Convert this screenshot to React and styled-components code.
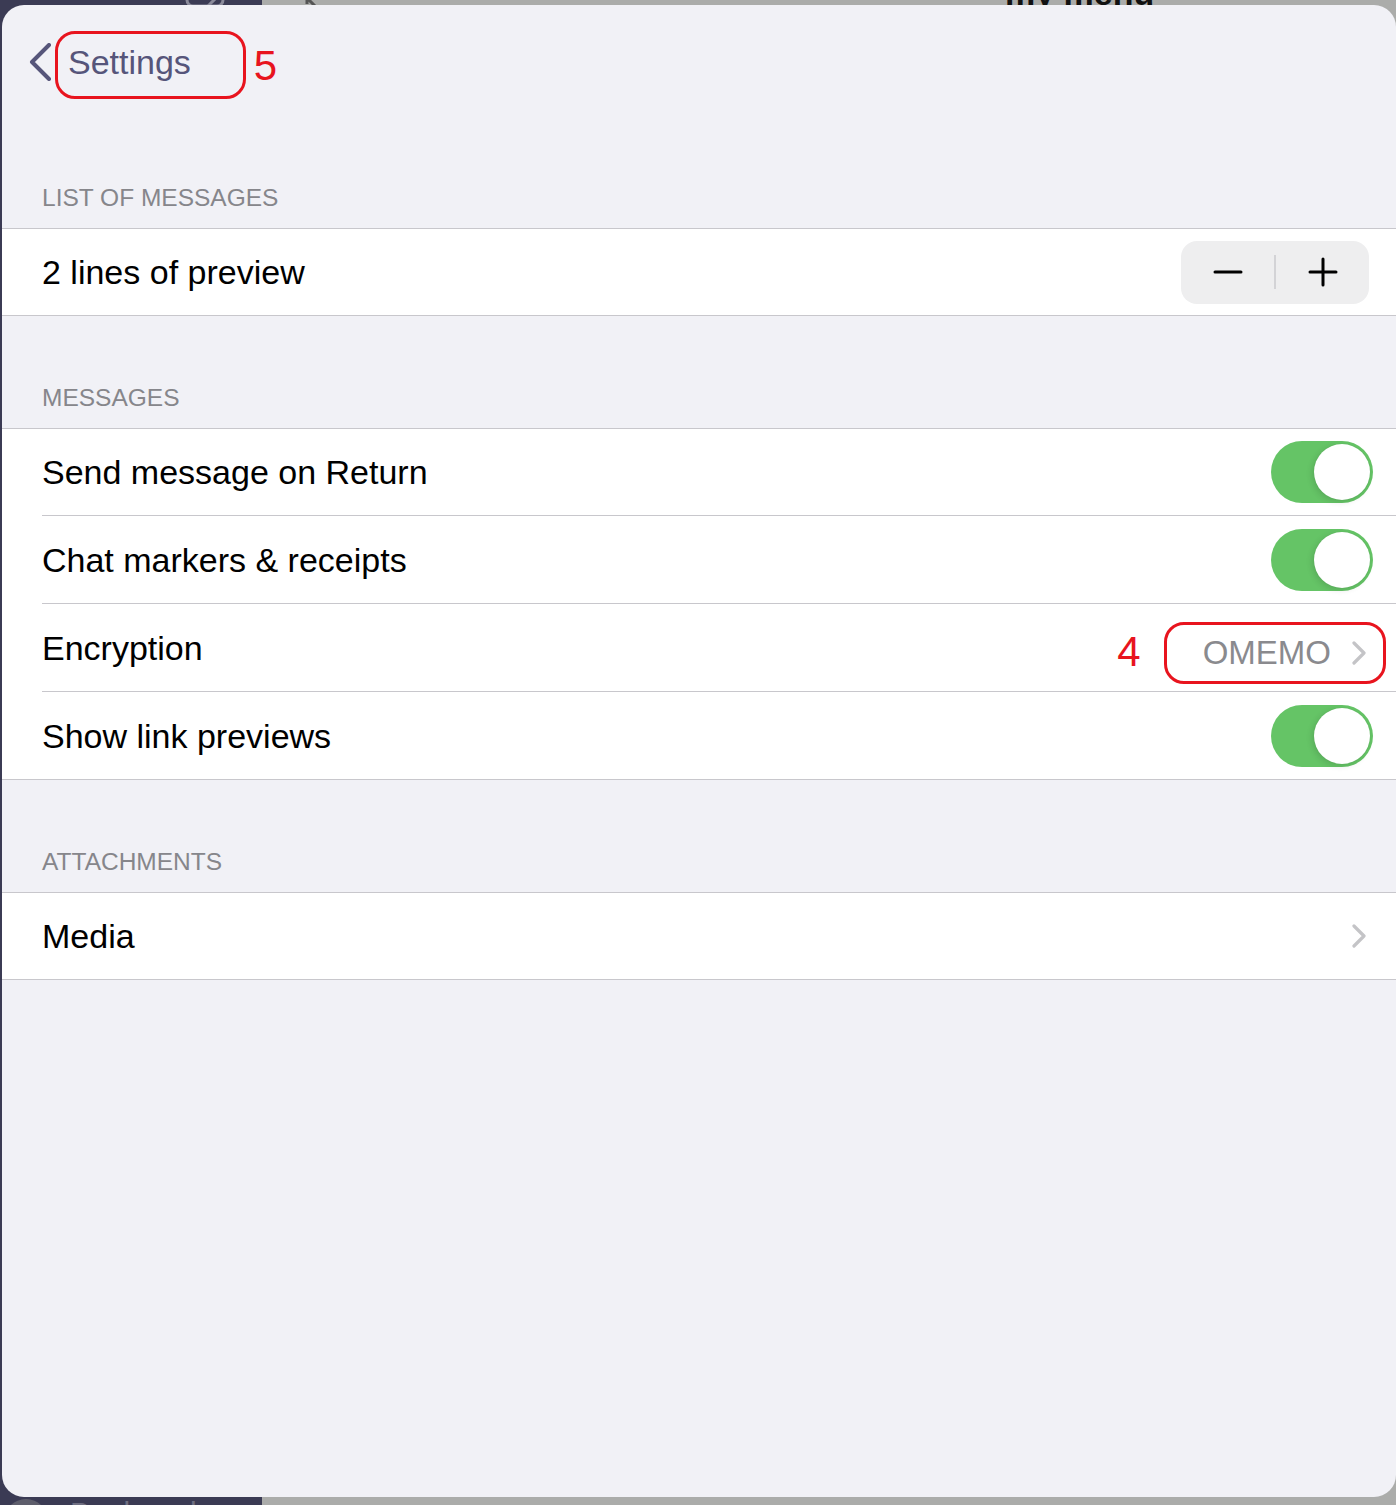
import React from 'react';
import styled, { createGlobalStyle } from 'styled-components';

const GlobalStyle = createGlobalStyle`
  html, body {
    margin: 0;
    padding: 0;
    overflow: hidden;
    font-family: "Liberation Sans", Arial, sans-serif;
  }
`;

const Page = styled.div`
  position: relative;
  width: 1396px;
  height: 1505px;
  overflow: hidden;
`;

const Backdrop = styled.div`
  display: grid;
  grid-template-columns: 262px 1fr;
  height: 100%;
`;

const Sidebar = styled.div`
  background: #3b3b54;
  display: flex;
  flex-direction: column;
  justify-content: space-between;
`;

const SidebarTop = styled.div`
  height: 8px;
  display: flex;
  justify-content: flex-end;
  padding-right: 34px;
  overflow: hidden;
`;

const SidebarBottom = styled.div`
  display: flex;
  align-items: flex-start;
  gap: 22px;
  height: 8px;
  padding-left: 4px;
`;

const Avatar = styled.div`
  width: 44px;
  height: 44px;
  border-radius: 50%;
  background: #5e5e6c;
  margin-top: 2px;
  flex: none;
`;

const SidebarLabel = styled.span`
  font-size: 30px;
  line-height: 1;
  color: #6f6f82;
  margin-top: 1px;
`;

const Main = styled.div`
  background: #abacaa;
`;

const MainTitleBar = styled.div`
  height: 10px;
  display: flex;
  align-items: flex-end;
`;

const MainTitle = styled.span`
  font-size: 34px;
  font-weight: 700;
  line-height: 1;
  color: #111;
  white-space: nowrap;
  margin-left: 676px;
`;

const Sheet = styled.div`
  position: absolute;
  top: 5px;
  left: 2px;
  right: 0;
  bottom: 8px;
  background: #f1f1f6;
  border-radius: 22px;
  overflow: hidden;
`;

const NavBar = styled.div`
  height: 114px;
  display: flex;
  align-items: center;
  padding-left: 26px;
`;

const BackButton = styled.div`
  display: flex;
  align-items: center;
  color: #56557a;
`;

const Annotation = styled.div`
  border: 3px solid #e8141e;
  border-radius: 20px;
  display: flex;
  align-items: center;
  box-sizing: border-box;
  height: ${(p) => p.$h}px;
  padding: ${(p) => p.$pad};
  margin: ${(p) => p.$margin || '0'};
`;

const AnnotationNumber = styled.span`
  color: #e8141e;
  font-size: 42px;
  line-height: 1;
  margin: ${(p) => p.$margin || '0'};
`;

const NavTitle = styled.span`
  font-size: 34px;
  line-height: 1;
  color: #56557a;
  margin-bottom: 6px;
`;

const SectionHeader = styled.div`
  height: ${(p) => p.$h}px;
  box-sizing: border-box;
  display: flex;
  align-items: flex-end;
  padding: 0 0 16px 40px;
  font-size: 24.5px;
  line-height: 28px;
  color: #86868b;
  text-transform: uppercase;
`;

const Group = styled.div`
  background: #fff;
  border-top: 1px solid #c8c7cc;
  border-bottom: 1px solid #c8c7cc;
`;

const RowWrap = styled.div`
  padding-left: 40px;
`;

const Row = styled.div`
  height: ${(p) => (p.$first ? 86 : 87)}px;
  display: flex;
  align-items: center;
  justify-content: space-between;
  padding-right: 24px;
  border-top: ${(p) => (p.$first ? 'none' : '1px solid #c8c7cc')};
`;

const RowLabel = styled.span`
  font-size: 34px;
  line-height: 1;
  color: #000;
`;

const Trailing = styled.div`
  display: flex;
  align-items: center;
`;

const DetailText = styled.span`
  font-size: 33px;
  line-height: 1;
  color: #8a8a8e;
  margin-right: 21px;
`;

const ChevronSlot = styled.span`
  display: flex;
  margin-right: 6px;
`;

const Stepper = styled.div`
  width: 188px;
  height: 63px;
  margin-right: 3px;
  border-radius: 16px;
  background: #eeeeef;
  display: grid;
  grid-template-columns: 1fr 2px 1fr;
  align-items: center;
`;

const StepButton = styled.div`
  display: flex;
  justify-content: center;
  align-items: center;
`;

const StepDivider = styled.div`
  height: 34px;
  background: #d3d3d6;
`;

const Toggle = styled.div`
  width: 102px;
  height: 62px;
  border-radius: 31px;
  background: ${(p) => (p.$on ? '#65c466' : '#e9e9ea')};
  display: flex;
  align-items: center;
  justify-content: ${(p) => (p.$on ? 'flex-end' : 'flex-start')};
  padding: 0 3px;
  box-sizing: border-box;
  margin-left: 1px;
  margin-right: -1px;
`;

const Knob = styled.div`
  width: 56px;
  height: 56px;
  border-radius: 50%;
  background: #fff;
  box-shadow: -2px 2px 6px rgba(0, 0, 0, 0.12), 0 0 1px rgba(0, 0, 0, 0.1);
`;

const Chevron = () => (
  <svg width="14" height="24" viewBox="0 0 14 24" fill="none">
    <path d="M2 2 L12 12 L2 22" stroke="#c4c4c7" strokeWidth="3.2" strokeLinecap="round" strokeLinejoin="round" />
  </svg>
);

const BackChevron = () => (
  <svg width="24" height="38" viewBox="0 0 24 38" fill="none">
    <path d="M21 2 L4 19 L21 36" stroke="#56557a" strokeWidth="4" strokeLinecap="round" strokeLinejoin="round" />
  </svg>
);

const Minus = () => (
  <svg width="30" height="30" viewBox="0 0 30 30">
    <path d="M2 15 H28" stroke="#000" strokeWidth="3" strokeLinecap="round" />
  </svg>
);

const Plus = () => (
  <svg width="30" height="30" viewBox="0 0 30 30">
    <path d="M2 15 H28 M15 2 V28" stroke="#000" strokeWidth="3" strokeLinecap="round" />
  </svg>
);

function Switch({ on }) {
  return (
    <Toggle $on={on}>
      <Knob />
    </Toggle>
  );
}

function SettingsRow({ label, first, children }) {
  return (
    <Row $first={first}>
      <RowLabel>{label}</RowLabel>
      <Trailing>{children}</Trailing>
    </Row>
  );
}

export default function App() {
  return (
    <Page>
      <GlobalStyle />
      <Backdrop>
        <Sidebar>
          <SidebarTop>
            <svg width="44" height="30" viewBox="0 0 44 30" fill="none">
              <rect x="3" y="-20" width="36" height="26" rx="6" stroke="#8a8a9a" strokeWidth="3" />
              <path d="M24 6 L34 -4" stroke="#8a8a9a" strokeWidth="3" />
            </svg>
          </SidebarTop>
          <SidebarBottom>
            <Avatar />
            <SidebarLabel>Bookmarks</SidebarLabel>
          </SidebarBottom>
        </Sidebar>
        <Main>
          <MainTitleBar>
            <svg width="30" height="10" viewBox="0 0 30 10" style={{ marginLeft: 37 }}>
              <path d="M8 -6 L8 4 M8 -2 L16 6" stroke="#555" strokeWidth="3" fill="none" />
            </svg>
            <MainTitle>my menu</MainTitle>
          </MainTitleBar>
        </Main>
      </Backdrop>

      <Sheet>
        <NavBar>
          <BackButton>
            <BackChevron />
            <Annotation $h={68} $pad="0 52px 0 10px" $margin="6px 0 0 3px">
              <NavTitle>Settings</NavTitle>
            </Annotation>
            <AnnotationNumber $margin="8px 0 0 8px">5</AnnotationNumber>
          </BackButton>
        </NavBar>

        <SectionHeader $h={109}>List of messages</SectionHeader>
        <Group>
          <RowWrap>
            <SettingsRow label="2 lines of preview" first>
              <Stepper>
                <StepButton>
                  <Minus />
                </StepButton>
                <StepDivider />
                <StepButton>
                  <Plus />
                </StepButton>
              </Stepper>
            </SettingsRow>
          </RowWrap>
        </Group>

        <SectionHeader $h={112}>Messages</SectionHeader>
        <Group>
          <RowWrap>
            <SettingsRow label="Send message on Return" first>
              <Switch on />
            </SettingsRow>
            <SettingsRow label="Chat markers & receipts">
              <Switch on />
            </SettingsRow>
            <SettingsRow label="Encryption">
              <AnnotationNumber $margin="8px 0 0 3px">4</AnnotationNumber>
              <Annotation $h={62} $pad="0 17px 0 36px" $margin="10px -14px 0 23px">
                <DetailText>OMEMO</DetailText>
                <Chevron />
              </Annotation>
            </SettingsRow>
            <SettingsRow label="Show link previews">
              <Switch on />
            </SettingsRow>
          </RowWrap>
        </Group>

        <SectionHeader $h={112}>Attachments</SectionHeader>
        <Group>
          <RowWrap>
            <SettingsRow label="Media" first>
              <ChevronSlot>
                <Chevron />
              </ChevronSlot>
            </SettingsRow>
          </RowWrap>
        </Group>
      </Sheet>
    </Page>
  );
}
